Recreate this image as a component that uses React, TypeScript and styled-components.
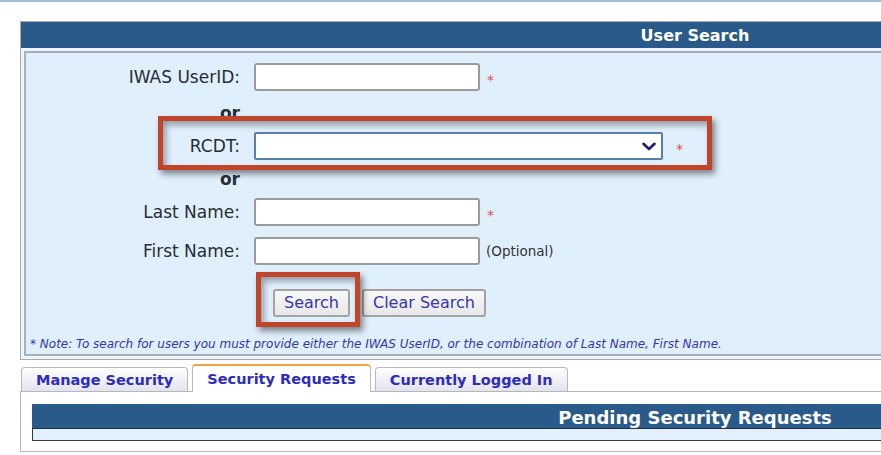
import React from "react";
import styled, { createGlobalStyle } from "styled-components";

const GlobalStyle = createGlobalStyle`
  html, body { margin: 0; padding: 0; background: #ffffff; overflow: hidden; }
  body { font-family: "DejaVu Sans", Verdana, sans-serif; }
  *, *::before, *::after { box-sizing: border-box; }
`;

const TopRule = styled.div`
  height: 2px;
  background: #9fc0d8;
`;

const Panel = styled.section`
  margin: 19px 0 3px 20px;
  width: 1350px;
  border: 1px solid #a9a9a9;
  background: #edf5fc;
`;

const PanelHeader = styled.div`
  height: 26px;
  line-height: 27px;
  background: #295a89;
  color: #ffffff;
  font-weight: bold;
  font-size: 16px;
  text-align: center;
`;

const Inner = styled.div`
  margin: 3px;
  border: 2px solid #a7b0b9;
  background: #e0effc;
  padding: 10px 0 3px 0;
`;

const Row = styled.div<{ $mt: number; $marked?: boolean }>`
  position: relative;
  display: flex;
  align-items: center;
  margin-top: ${(p) => p.$mt}px;
  ${(p) =>
    p.$marked &&
    `
    &::after {
      content: "";
      position: absolute;
      left: 132px;
      top: -16px;
      width: 554px;
      height: 54px;
      border: 5px solid #c1452b;
      box-shadow: 3px 4px 6px rgba(0,0,0,0.45), inset 3px 4px 6px rgba(0,0,0,0.35);
      pointer-events: none;
    }
  `}
`;

const Label = styled.label<{ $bold?: boolean }>`
  flex-shrink: 0;
  width: 214px;
  margin-right: 14px;
  text-align: right;
  font-size: 17px;
  line-height: 18px;
  color: #262d35;
  font-weight: ${(p) => (p.$bold ? "bold" : "normal")};
`;

const TextInput = styled.input`
  width: 226px;
  height: 28px;
  border: 2px solid #9b9b9b;
  border-radius: 3px;
  background: #ffffff;
  padding: 0 4px;
  font-size: 14px;
  font-family: inherit;
  outline: none;
`;

const SelectBox = styled.div`
  width: 409px;
  height: 28px;
  border: 2px solid #5b7ea6;
  border-radius: 2px;
  background: #ffffff;
  display: flex;
  align-items: center;
  justify-content: flex-end;
  padding-right: 5px;
`;

const Required = styled.span<{ $gap: number }>`
  margin-left: ${(p) => p.$gap}px;
  color: #ec4a4a;
  font-size: 14px;
  line-height: 1;
  padding-top: 6px;
`;

const Hint = styled.span`
  margin-left: 6px;
  font-size: 13.5px;
  color: #333333;
`;

const ButtonGroup = styled.div`
  display: flex;
  gap: 12px;
  margin: 24px 0 0 247px;
`;

const ButtonMark = styled.span`
  position: relative;
  display: inline-flex;
  &::after {
    content: "";
    position: absolute;
    inset: -17px -10px -10px -17px;
    border: 5px solid #c1452b;
    box-shadow: 3px 4px 6px rgba(0,0,0,0.45), inset 3px 4px 6px rgba(0,0,0,0.35);
    pointer-events: none;
  }
`;

const Button = styled.button`
  height: 28px;
  padding: 0 9px;
  border: 2px solid #a3a3a3;
  border-radius: 3px;
  background: linear-gradient(#f8f8f8, #e8e8e8);
  color: #3636ad;
  font-family: "DejaVu Sans", Verdana, sans-serif;
  font-size: 16px;
  line-height: 1;
`;

const Note = styled.div`
  margin-top: 20px;
  padding-left: 4px;
  font-size: 12px;
  line-height: 14px;
  font-style: italic;
  color: #3535aa;
  white-space: nowrap;
`;

const TabStrip = styled.div`
  display: flex;
  align-items: flex-end;
  gap: 4px;
  margin: 4px 0 0 21px;
  position: relative;
  z-index: 1;
`;

const Tab = styled.div<{ $active?: boolean }>`
  height: ${(p) => (p.$active ? 28 : 24)}px;
  margin-bottom: ${(p) => (p.$active ? -1 : 0)}px;
  padding: 0 14px ${(p) => (p.$active ? 1 : 0)}px;
  display: flex;
  align-items: center;
  border: 1px solid #b9b9c3;
  border-bottom: none;
  border-top: ${(p) => (p.$active ? "2px solid #f3a43b" : "1px solid #b9b9c3")};
  border-radius: 4px 4px 0 0;
  background: ${(p) => (p.$active ? "#ffffff" : "linear-gradient(#ffffff, #e3e3ee)")};
  color: #2d2dbd;
  font-weight: bold;
  font-size: 14.5px;
  white-space: nowrap;
`;

const ContentBox = styled.div`
  width: 1350px;
  margin-left: 20px;
  border: 1px solid #b7b7b7;
  background: #ffffff;
  padding: 12px 11px 10px;
`;

const PendingHeader = styled.div`
  height: 25px;
  padding-top: 1px;
  line-height: 25px;
  background: #295a89;
  border-bottom: 1px solid #1d3046;
  color: #ffffff;
  font-weight: bold;
  font-size: 18px;
  text-align: center;
`;

const EmptyRow = styled.div`
  height: 12px;
  background: #e2f0fc;
  border: 1px solid #3a3a3a;
  border-top: none;
`;

const Chevron = () => (
  <svg width="14" height="9" viewBox="0 0 14 9">
    <path d="M1.5 1.8 L7 7 L12.5 1.8" fill="none" stroke="#1c1c6a" strokeWidth="2.6" strokeLinecap="round" strokeLinejoin="round" />
  </svg>
);

export default function App() {
  return (
    <>
      <GlobalStyle />
      <TopRule />
      <Panel>
        <PanelHeader>User Search</PanelHeader>
        <Inner>
          <Row $mt={0}>
            <Label>IWAS UserID:</Label>
            <TextInput />
            <Required $gap={7}>*</Required>
          </Row>
          <Row $mt={13}>
            <Label $bold>or</Label>
          </Row>
          <Row $mt={10} $marked>
            <Label>RCDT:</Label>
            <SelectBox>
              <Chevron />
            </SelectBox>
            <Required $gap={13}>*</Required>
          </Row>
          <Row $mt={10}>
            <Label $bold>or</Label>
          </Row>
          <Row $mt={10}>
            <Label>Last Name:</Label>
            <TextInput />
            <Required $gap={7}>*</Required>
          </Row>
          <Row $mt={11}>
            <Label>First Name:</Label>
            <TextInput />
            <Hint>(Optional)</Hint>
          </Row>
          <ButtonGroup>
            <ButtonMark>
              <Button>Search</Button>
            </ButtonMark>
            <Button>Clear Search</Button>
          </ButtonGroup>
          <Note>
            * Note: To search for users you must provide either the IWAS UserID, or the combination of Last Name, First Name.
          </Note>
        </Inner>
      </Panel>
      <TabStrip>
        <Tab>Manage Security</Tab>
        <Tab $active>Security Requests</Tab>
        <Tab>Currently Logged In</Tab>
      </TabStrip>
      <ContentBox>
        <PendingHeader>Pending Security Requests</PendingHeader>
        <EmptyRow />
      </ContentBox>
    </>
  );
}
